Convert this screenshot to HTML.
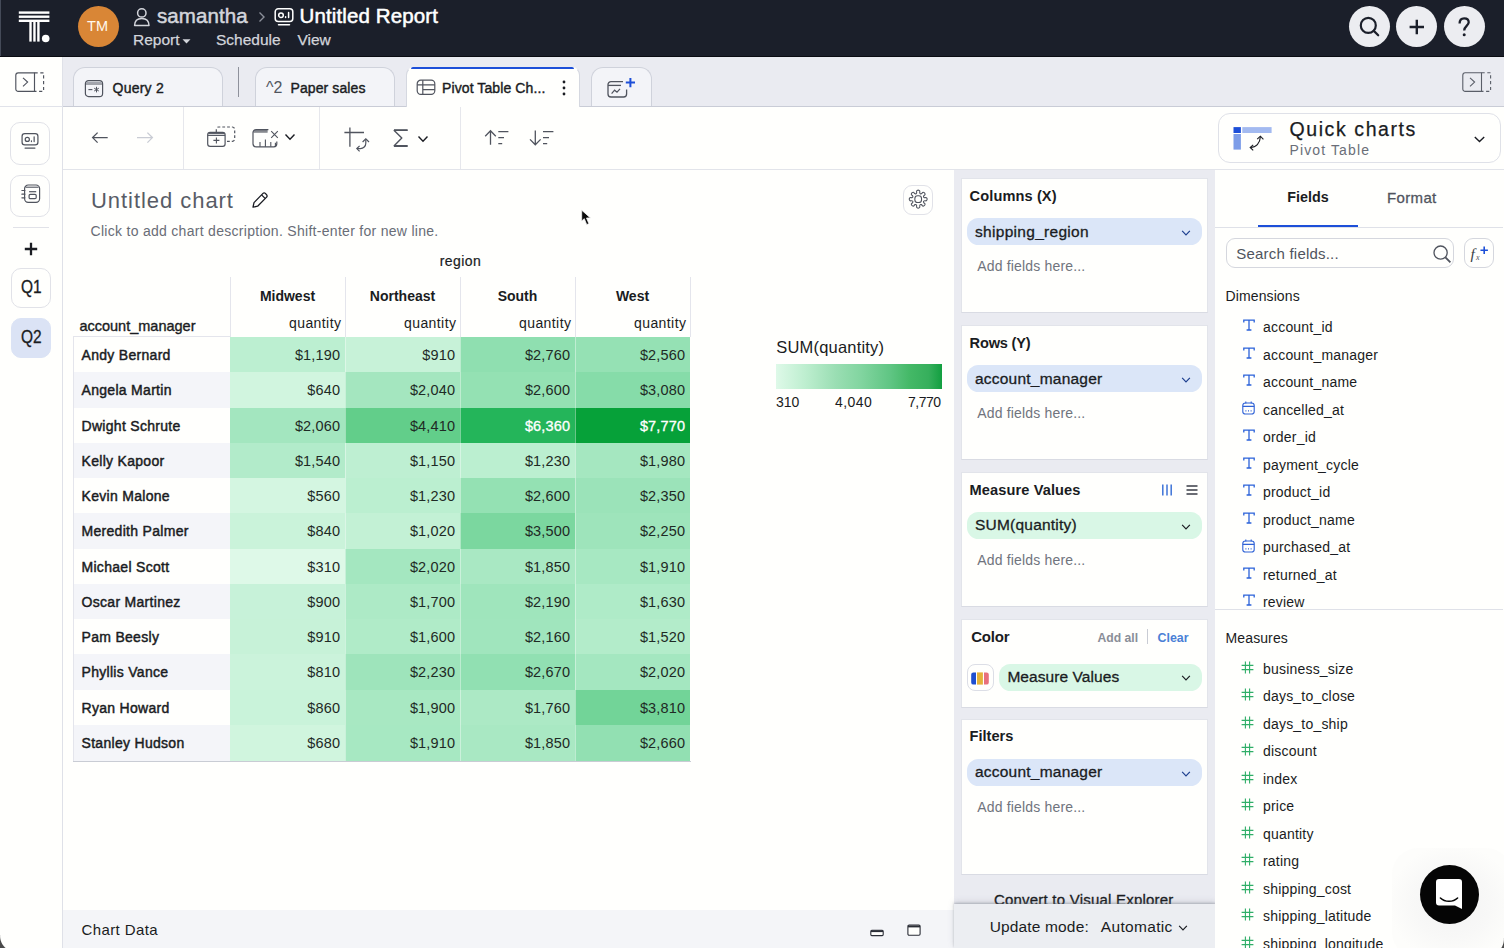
<!DOCTYPE html>
<html>
<head>
<meta charset="utf-8">
<title>Untitled Report</title>
<style>
*{box-sizing:border-box;margin:0;padding:0}
html,body{width:1504px;height:948px;overflow:hidden;background:#fffffd;font-family:"Liberation Sans",sans-serif;color:#1a1c22}
.abs{position:absolute}
#root{position:relative;width:1504px;height:948px;overflow:hidden;background:#fffffd}
svg{display:block;overflow:visible}
/* header */
#hdr{left:0;top:0;width:1504px;height:57px;border-bottom:1px solid #0a0c12;background:#1b1f2a}
.t{position:absolute;white-space:nowrap;line-height:1}
/* tab strip */
#tabs{left:63px;top:57px;width:1441px;height:50px;background:#eaebf1;border-bottom:1px solid #c9ccd6}
.tab{position:absolute;top:10px;height:39px;border:1px solid #cfd2db;border-bottom:none;border-radius:12px 12px 0 0;background:#f3f4f8}
/* left sidebar */
#lside{left:0;top:57px;width:63px;height:891px;background:#fffffd;border-right:1px solid #dfe1e8}
.sbtn{position:absolute;left:10.3px;width:39.5px;border:1px solid #e1e2e8;border-radius:10px;background:#fffffd}
/* toolbar */
#tbar{left:63px;top:107px;width:1441px;height:63px;background:#fffffd;border-bottom:1px solid #e2e4ea}
.vdiv{position:absolute;top:0;width:1px;height:62px;background:#e6e7ec}
/* config column */
#cfg{left:953.5px;top:170px;width:261.5px;height:778px;background:#eaebf1}
.card{position:absolute;left:7.5px;width:246.5px;background:#fffffd;border:1px solid #e2e4ea;border-bottom-color:#d9dbe3}
.pill{position:absolute;left:5px;width:235px;height:25px;border-radius:12.5px}
.pill.b{background:#dbe6f8}
.pill.g{background:#d9f7e6}
.ct{position:absolute;left:7.6px;font-size:14.6px;font-weight:bold;color:#1a1c22;white-space:nowrap;line-height:1}
.ph{position:absolute;left:15.3px;font-size:14px;letter-spacing:0.17px;color:#70747d;white-space:nowrap;line-height:1}
/* right panel */
#rp{left:1215px;top:170px;width:289px;height:778px;background:#fffffd}
.fl{position:absolute;left:48px;font-size:14px;letter-spacing:0.2px;margin-top:-0.6px;color:#1a1c22;white-space:nowrap;line-height:1}
/* table */
.rh{position:absolute;left:10px;width:157.5px;height:36px;font-size:14px;letter-spacing:0.3px;-webkit-text-stroke:0.45px #1a1c22;color:#1a1c22;padding-left:8.5px;white-space:nowrap;overflow:hidden}
.c{position:absolute;width:115px;font-size:14.5px;letter-spacing:0.14px;color:#1f2a25;text-align:right;padding-right:4.9px;white-space:nowrap;overflow:hidden}
.ch{width:115px;text-align:center;font-size:14px;font-weight:bold;color:#1a1c22}
.cq{width:111.4px;text-align:right;font-size:14px;letter-spacing:0.42px;color:#1a1c22}
.lgl{font-size:14px;color:#1a1c22}
.pt{position:absolute;left:13px;font-size:15.5px;color:#1a1c22;white-space:nowrap;line-height:1;-webkit-text-stroke:0.3px #1a1c22}
.chv{position:absolute;left:219px}
.pill{height:27px;border-radius:11.5px}
.md{-webkit-text-stroke:0.4px currentColor}
</style>
</head>
<body>
<div id="root">

<!-- HEADER -->
<div id="hdr" class="abs">
  <div class="abs" style="left:0;top:0;width:1px;height:56px;background:#444a58"></div>
  <!-- logo -->
  <svg class="abs" style="left:20px;top:10px" width="34" height="36" viewBox="0 0 34 36">
    <g fill="#ffffff">
      <rect x="-1.2" y="1.4" width="30.6" height="2.4"/>
      <rect x="-1.2" y="5.5" width="30.6" height="2.4"/>
      <rect x="-1.2" y="9.6" width="30.6" height="2.4"/>
      <rect x="9.3" y="12" width="2.4" height="19.6"/>
      <rect x="13.25" y="12" width="2.4" height="19.6"/>
      <rect x="17.2" y="12" width="2.4" height="19.6"/>
      <circle cx="25.7" cy="28.5" r="3.8"/>
    </g>
  </svg>
  <!-- avatar -->
  <div class="abs" style="left:77.6px;top:6.2px;width:41px;height:41px;border-radius:50%;background:#d98636"></div>
  <div class="t" style="left:87px;top:19px;font-size:14.5px;color:#fff8ee;letter-spacing:0.2px">TM</div>
  <!-- person icon -->
  <svg class="abs" style="left:133px;top:7px" width="18" height="21" viewBox="0 0 18 21" fill="none" stroke="#d3d5db" stroke-width="1.5">
    <circle cx="8.8" cy="5.9" r="4.2"/>
    <path d="M1.6 18.6 C1.6 13.6 4.6 11.4 8.8 11.4 C13 11.4 16 13.6 16 18.6 Z" stroke-linejoin="round"/>
  </svg>
  <div class="t" id="h_sam" style="left:157px;top:6px;font-size:20.5px;letter-spacing:0.1px;color:#d3d5db;-webkit-text-stroke:0.5px #d3d5db">samantha</div>
  <svg class="abs" style="left:258px;top:11px" width="8" height="12" viewBox="0 0 8 12" fill="none" stroke="#8c909b" stroke-width="1.4"><path d="M1.5 1.5 L6 6 L1.5 10.5"/></svg>
  <!-- report icon -->
  <svg class="abs" style="left:274px;top:7px" width="20" height="20" viewBox="0 0 20 20" fill="none" stroke="#ffffff" stroke-width="1.5">
    <rect x="1.2" y="1.8" width="17.6" height="12.6" rx="3"/>
    <circle cx="7" cy="8.2" r="2.3"/>
    <path d="M11.6 10.6 v-0.8 M14.6 10.6 v-5.2 M4.5 17.8 h11" stroke-linecap="round"/>
  </svg>
  <div class="t" id="h_title" style="left:299.5px;top:6px;font-size:20.5px;letter-spacing:0.12px;color:#ffffff;-webkit-text-stroke:0.5px #ffffff">Untitled Report</div>
  <div class="t" id="h_rep" style="left:133px;top:32px;font-size:15.5px;color:#d3d5db;-webkit-text-stroke:0.25px #d3d5db">Report</div>
  <svg class="abs" style="left:182px;top:39px" width="9" height="5" viewBox="0 0 9 5"><path d="M0.5 0.3 L8.5 0.3 L4.5 4.6 Z" fill="#d3d5db"/></svg>
  <div class="t" id="h_sch" style="left:216px;top:32px;font-size:15.5px;color:#d3d5db;-webkit-text-stroke:0.25px #d3d5db">Schedule</div>
  <div class="t" id="h_view" style="left:297.5px;top:32px;font-size:15.5px;color:#d3d5db;-webkit-text-stroke:0.25px #d3d5db">View</div>
  <!-- right circles -->
  <div class="abs" style="left:1349px;top:6px;width:41px;height:41px;border-radius:50%;background:#ecedf1"></div>
  <div class="abs" style="left:1396px;top:6px;width:41px;height:41px;border-radius:50%;background:#ecedf1"></div>
  <div class="abs" style="left:1444px;top:6px;width:41px;height:41px;border-radius:50%;background:#ecedf1"></div>
  <svg class="abs" style="left:1358px;top:15px" width="24" height="24" viewBox="0 0 24 24" fill="none" stroke="#1b1f2a" stroke-width="2.2"><circle cx="10.3" cy="10.4" r="7.5"/><path d="M15.8 15.9 L20.2 20.3" stroke-linecap="round"/></svg>
  <svg class="abs" style="left:1406px;top:16px" width="22" height="22" viewBox="0 0 22 22" fill="none" stroke="#1b1f2a" stroke-width="2.4"><path d="M10.8 3.8 V18.2 M3.6 11 H18"/></svg>
  <svg class="abs" style="left:1454px;top:14px" width="20" height="26" viewBox="0 0 20 26" fill="none" stroke="#1b1f2a" stroke-width="2.3"><path d="M5.6 9.6 C5.6 5.6 7.6 4.3 10.2 4.3 C12.9 4.3 14.7 5.9 14.7 8.3 C14.7 11.8 10.2 12.2 10.2 16.6"/><circle cx="10.2" cy="20.7" r="1.5" fill="#1b1f2a" stroke="none"/></svg>
</div>

<!-- LEFT SIDEBAR -->
<div id="lside" class="abs">
  <!-- collapse icon (coords relative to lside top=57) -->
  <svg class="abs" style="left:14px;top:14px" width="32" height="24" viewBox="0 0 32 24" fill="none" stroke="#50545e" stroke-width="1.15">
    <path d="M20.5 1.8 H4.2 a2.4 2.4 0 0 0 -2.4 2.4 V18 a2.4 2.4 0 0 0 2.4 2.4 H20.5 Z"/>
    <path d="M9 6.8 L13.6 11.1 L9 15.4"/>
    <path d="M20.5 1.8 H29.6 V20.4 H20.5" stroke-dasharray="3.2 2.6"/>
  </svg>
  <div class="abs" style="left:0;top:49px;width:63px;height:1px;background:#e1e3ea"></div>
  <div class="sbtn" style="top:65px;height:42.6px"></div>
  <svg class="abs" style="left:21px;top:75.4px" width="18" height="18" viewBox="0 0 20 20" fill="none" stroke="#50545e" stroke-width="1.35">
    <rect x="1.2" y="1.8" width="17.6" height="12.6" rx="3"/>
    <circle cx="7" cy="8.2" r="2.3"/>
    <path d="M11.6 10.6 v-0.8 M14.6 10.6 v-5.2 M4.5 17.8 h11" stroke-linecap="round"/>
  </svg>
  <div class="sbtn" style="top:117.8px;height:42.4px"></div>
  <svg class="abs" style="left:20.6px;top:127px" width="20" height="20" viewBox="0 0 20 20" fill="none" stroke="#50545e" stroke-width="1.2">
    <rect x="3.6" y="1" width="15" height="17.4" rx="3.6"/>
    <path d="M4.6 3.2 H17.6" stroke-width="1.1"/>
    <path d="M8.1 7.7 H15.2"/>
    <rect x="8.1" y="10.3" width="7.1" height="4.4" rx="1.2"/>
    <path d="M0.9 6.5 h3 M0.9 10.2 h3 M0.9 13.8 h3" stroke-linecap="round"/>
  </svg>
  <div class="abs" style="left:13px;top:170px;width:36px;height:1px;background:#e1e2e8"></div>
  <svg class="abs" style="left:24.4px;top:184.6px" width="14" height="14" viewBox="0 0 14 14" fill="none" stroke="#1a1c22" stroke-width="2.3"><path d="M7 0.8 V13.2 M0.8 7 H13.2"/></svg>
  <div class="sbtn" style="top:211px;height:40px;left:11px;width:40px"></div>
  <div class="t" style="left:19.7px;top:221.6px;transform:scale(0.91,1.08);font-size:17px;color:#1a1c22;-webkit-text-stroke:0.3px #1a1c22">Q1</div>
  <div class="sbtn" style="top:261px;height:40px;left:11px;width:40px;background:#dbe3f5;border-color:#dbe3f5"></div>
  <div class="t" style="left:19.7px;top:271.6px;transform:scale(0.91,1.08);font-size:17px;color:#1a1c22;-webkit-text-stroke:0.3px #1a1c22">Q2</div>
</div>

<!-- TAB STRIP -->
<div id="tabs" class="abs">
  <!-- coordinates relative to (63,57) -->
  <div class="tab" style="left:10px;width:150px"></div>
  <svg class="abs" style="left:21px;top:21.9px" width="20" height="20" viewBox="0 0 20 20" fill="none" stroke="#50545e" stroke-width="1.2">
    <rect x="1.4" y="1.6" width="17.2" height="16" rx="3.2"/>
    <path d="M1.6 5 H18.4" stroke-width="1"/>
    <path d="M2.4 3.4 H17.6" stroke-width="1" stroke="#9a9da6"/>
    <path d="M4.4 10.6 H8.4" stroke-width="1.1"/><path d="M12.5 7.8 V13.4 M10.2 9.2 L14.8 12 M14.8 9.2 L10.2 12" stroke-width="1"/>
  </svg>
  <div class="t md" id="tb1" style="left:49.5px;top:24.2px;font-size:14px;letter-spacing:0.25px;color:#1a1c22">Query 2</div>
  <div class="abs" style="left:175px;top:10px;width:1px;height:30px;background:#8e919b"></div>
  <div class="tab" style="left:191.5px;width:140.5px"></div>
  <div class="t" style="left:203px;top:23px;font-size:16px;color:#50545e">^2</div>
  <div class="t md" id="tb2" style="left:227.5px;top:24.2px;font-size:14px;letter-spacing:0.1px;color:#1a1c22">Paper sales</div>
  <div class="tab" style="left:342.5px;width:174.5px;height:41px;background:#fffffd;border-color:#d5d8e0;border-top-color:transparent;border-radius:8px 8px 0 0"></div><div class="abs" style="left:348px;top:9.6px;width:163px;height:2.9px;background:#1d4fd8;border-radius:2px 2px 0 0"></div>
  <svg class="abs" style="left:353px;top:22px" width="20" height="17" viewBox="0 0 20 17" fill="none" stroke="#50545e" stroke-width="1.2">
    <rect x="1.2" y="1.2" width="17.6" height="14.2" rx="3.6"/>
    <path d="M1.2 5.8 H18.8 M6.8 1.2 V15.4 M6.8 10.6 H18.8"/>
  </svg>
  <div class="t md" id="tb3" style="left:379px;top:24.2px;font-size:14px;letter-spacing:0.1px;color:#1a1c22">Pivot Table Ch...</div>
  <svg class="abs" style="left:498px;top:22px" width="6" height="18" viewBox="0 0 6 18" fill="#1a1c22"><circle cx="3" cy="3" r="1.4"/><circle cx="3" cy="9" r="1.4"/><circle cx="3" cy="15" r="1.4"/></svg>
  <div class="tab" style="left:527.5px;width:61.5px"></div>
  <svg class="abs" style="left:543px;top:20px" width="32" height="22" viewBox="0 0 32 22" fill="none" stroke="#50545e" stroke-width="1.3">
    <path d="M17 4.6 H5 a3 3 0 0 0 -3 3 V17 a3 3 0 0 0 3 3 H17.6 a3 3 0 0 0 3 -3 V12.6"/>
    <path d="M2 8.4 H15"/>
    <path d="M5.6 16.6 L8.6 13.2 L11 15.2 L14 11.8" stroke-width="1.2"/>
    <path d="M5.4 23.2 H17.4" stroke-width="0"/>
    <path d="M24.4 1 V10.2 M19.8 5.6 H29" stroke="#1d4fd8" stroke-width="2"/>
  </svg>
  <!-- right collapse icon -->
  <svg class="abs" style="left:1398px;top:14px" width="32" height="24" viewBox="0 0 32 24" fill="none" stroke="#5a5e68" stroke-width="1.1">
    <path d="M20.5 1.8 H4.2 a2.4 2.4 0 0 0 -2.4 2.4 V18 a2.4 2.4 0 0 0 2.4 2.4 H20.5 Z"/>
    <path d="M9 6.8 L13.6 11.1 L9 15.4"/>
    <path d="M20.5 1.8 H29.6 V20.4 H20.5" stroke-dasharray="3.2 2.6"/>
  </svg>
</div>

<!-- TOOLBAR -->
<div id="tbar" class="abs">
  <!-- coordinates relative to (63,107) -->
  <svg class="abs" style="left:28px;top:24px" width="18" height="14" viewBox="0 0 18 14" fill="none" stroke="#50545e" stroke-width="1.3"><path d="M16.7 6.6 H1.8 M6.6 1.6 L1.6 6.6 L6.6 11.6"/></svg>
  <svg class="abs" style="left:73px;top:24px" width="18" height="14" viewBox="0 0 18 14" fill="none" stroke="#c9ccd4" stroke-width="1.3"><path d="M1 6.6 H16.2 M11.4 1.6 L16.4 6.6 L11.4 11.6"/></svg>
  <div class="vdiv" style="left:120px"></div>
  <!-- duplicate -->
  <svg class="abs" style="left:143px;top:19px" width="31" height="25" viewBox="0 0 31 25" fill="none" stroke="#50545e" stroke-width="1.2">
    <path d="M10.3 6 V3.4 a2.4 2.4 0 0 1 2.4 -2.4 H26.3 a2.4 2.4 0 0 1 2.4 2.4 V12.9 a2.4 2.4 0 0 1 -2.4 2.4 H19.4" stroke-dasharray="2.8 2"/>
    <rect x="1.7" y="6.4" width="17.4" height="13.9" rx="2.4"/>
    <path d="M1.7 9.4 H19.1" stroke-width="1.1"/>
    <path d="M2.6 7.6 H18.2" stroke-width="1" />
    <path d="M10.4 11.4 V17.4 M7.4 14.4 H13.4" stroke-width="1.1"/>
  </svg>
  <!-- chart x -->
  <svg class="abs" style="left:189px;top:20px" width="28" height="24" viewBox="0 0 28 24" fill="none" stroke="#50545e" stroke-width="1.2">
    <path d="M16.4 2.6 H4 a3 3 0 0 0 -3 3 V16.8 a3 3 0 0 0 3 3 H21.8 a3 3 0 0 0 3 -3 V14.6" />
    <path d="M1.4 5 H15.6" stroke-width="1.1"/>
    <path d="M2.4 3.8 H15.6" stroke-width="1"/>
    <path d="M8 19.8 V15 M13.4 19.8 V12.4 M18.8 19.8 V15 M23.4 19.4 V15.8" stroke-width="1.1"/>
    <path d="M19.2 4.2 L25.8 10.8 M25.8 4.2 L19.2 10.8" stroke-width="1.1"/>
  </svg>
  <svg class="abs" style="left:222px;top:27.4px" width="10" height="6" viewBox="0 0 10 6" fill="none" stroke="#1a1c22" stroke-width="1.4"><path d="M0.5 0.6 L5 5.2 L9.5 0.6"/></svg>
  <div class="vdiv" style="left:255.5px"></div>
  <!-- pivot swap -->
  <svg class="abs" style="left:280px;top:19px" width="28" height="26" viewBox="0 0 28 26" fill="none" stroke="#50545e" stroke-width="1.3">
    <path d="M6.9 1.4 V20.8 M1.4 6.5 H21"/>
    <path d="M14 22.6 H17.4 a5.4 5.4 0 0 0 5.4 -5.4 V13.4" stroke-width="1.2"/>
    <path d="M16.6 19.8 L13.8 22.6 L16.6 25.4 M19.6 16 L22.8 12.8 L26 16" stroke-width="1.2"/>
  </svg>
  <!-- sigma -->
  <svg class="abs" style="left:329px;top:21.2px" width="18" height="20" viewBox="0 0 18 20" fill="none" stroke="#50545e" stroke-width="1.4"><path d="M15.6 2.4 H2.2 L9.8 10 L2.2 17.8 H15.6" stroke-linejoin="round"/><path d="M2 2 H15.6 M2 18.2 H15.6" stroke-width="1.6"/></svg>
  <svg class="abs" style="left:355px;top:29.4px" width="10" height="6" viewBox="0 0 10 6" fill="none" stroke="#1a1c22" stroke-width="1.4"><path d="M0.5 0.6 L5 5.2 L9.5 0.6"/></svg>
  <div class="vdiv" style="left:396.5px"></div>
  <!-- sort asc -->
  <svg class="abs" style="left:421px;top:22px" width="27" height="18" viewBox="0 0 27 18" fill="none" stroke="#50545e" stroke-width="1.3">
    <path d="M6.5 15.8 V2 M1.2 7.2 L6.5 1.8 L11.8 7.2"/>
    <path d="M14.3 2.6 H24.4 M14.3 8.7 H20 M14.3 14.7 H18.2"/>
  </svg>
  <!-- sort desc -->
  <svg class="abs" style="left:466px;top:22px" width="27" height="18" viewBox="0 0 27 18" fill="none" stroke="#50545e" stroke-width="1.3">
    <path d="M6.3 1.6 V15.6 M1 10.4 L6.3 15.8 L11.6 10.4"/>
    <path d="M14 2.6 H24.4 M14 8.7 H20 M14 14.7 H18.2"/>
  </svg>
  <!-- quick charts -->
  <div class="abs" style="left:1155px;top:6px;width:283px;height:50px;border:1px solid #dfe1e8;border-radius:12px;background:#fffffd"></div>
  <svg class="abs" style="left:1169px;top:19px" width="42" height="28" viewBox="0 0 42 28">
    <rect x="1.5" y="1.1" width="7.4" height="5.9" fill="#1d4fd8"/>
    <rect x="10.3" y="1.1" width="29.3" height="5.9" fill="#a3baf0"/>
    <rect x="1.5" y="8" width="7.4" height="15.6" fill="#7d9de8"/>
    <g fill="none" stroke="#1a1c22" stroke-width="1.1"><path d="M18.5 21.5 C24 21.5 28 17.5 28.4 10.6"/><path d="M21.2 18.8 L18.2 21.5 L21.2 24.4 M25.2 13.2 L28.4 10.2 L31.4 13.4"/></g>
  </svg>
  <div class="t" id="qc1" style="left:1226.5px;top:13px;font-size:19.5px;letter-spacing:1.59px;color:#1a1c22;-webkit-text-stroke:0.25px #1a1c22">Quick charts</div>
  <div class="t" id="qc2" style="left:1226.5px;top:36px;font-size:14px;letter-spacing:1.12px;color:#6a6e78">Pivot Table</div>
  <svg class="abs" style="left:1411px;top:29px" width="11" height="7" viewBox="0 0 11 7" fill="none" stroke="#1a1c22" stroke-width="1.4"><path d="M0.8 1 L5.5 5.6 L10.2 1"/></svg>
</div>

<!-- MAIN -->
<div id="main" class="abs" style="left:63px;top:170px;width:891px;height:778px">
  <!-- coordinates relative to (63,170) -->
  <div class="t" id="m_title" style="left:28px;top:19.5px;font-size:22px;letter-spacing:0.95px;color:#585c66">Untitled chart</div>
  <svg class="abs" style="left:188px;top:21px" width="18" height="18" viewBox="0 0 18 18" fill="none" stroke="#1a1c22" stroke-width="1.3">
    <path d="M2 16.2 L3 11.6 L12 2.4 a1.6 1.6 0 0 1 2.3 0 L15.6 3.8 a1.6 1.6 0 0 1 0 2.3 L6.6 15.2 Z" stroke-linejoin="round"/>
    <path d="M10.6 3.9 L14.1 7.4"/>
  </svg>
  <div class="t" id="m_desc" style="left:27.5px;top:54.3px;font-size:14px;letter-spacing:0.29px;color:#696d77">Click to add chart description. Shift-enter for new line.</div>
  <!-- gear -->
  <div class="abs" style="left:840.3px;top:15px;width:29.7px;height:30px;border:1px solid #e1e2e8;border-radius:9px"></div>
  <svg class="abs" style="left:844.2px;top:18.3px" width="22.4" height="22.4" viewBox="0 0 24 24" fill="none" stroke="#50545e" stroke-width="1.15" stroke-linejoin="round">
    <rect x="8.4" y="8.4" width="7.2" height="7.2" rx="3"/>
    <path d="M10.64 2.90 C11.69 2.02 12.31 2.02 13.36 2.90 C14.41 3.78 13.14 4.45 13.79 5.54 C14.44 6.63 14.07 6.48 15.30 6.17 C16.53 5.86 16.11 4.48 17.47 4.60 C18.84 4.72 19.28 5.16 19.40 6.53 C19.52 7.89 18.14 7.47 17.83 8.70 C17.52 9.93 17.37 9.56 18.46 10.21 C19.55 10.86 20.22 9.59 21.10 10.64 C21.98 11.69 21.98 12.31 21.10 13.36 C20.22 14.41 19.55 13.14 18.46 13.79 C17.37 14.44 17.52 14.07 17.83 15.30 C18.14 16.53 19.52 16.11 19.40 17.47 C19.28 18.84 18.84 19.28 17.47 19.40 C16.11 19.52 16.53 18.14 15.30 17.83 C14.07 17.52 14.44 17.37 13.79 18.46 C13.14 19.55 14.41 20.22 13.36 21.10 C12.31 21.98 11.69 21.98 10.64 21.10 C9.59 20.22 10.86 19.55 10.21 18.46 C9.56 17.37 9.93 17.52 8.70 17.83 C7.47 18.14 7.89 19.52 6.53 19.40 C5.16 19.28 4.72 18.84 4.60 17.47 C4.48 16.11 5.86 16.53 6.17 15.30 C6.48 14.07 6.63 14.44 5.54 13.79 C4.45 13.14 3.78 14.41 2.90 13.36 C2.02 12.31 2.02 11.69 2.90 10.64 C3.78 9.59 4.45 10.86 5.54 10.21 C6.63 9.56 6.48 9.93 6.17 8.70 C5.86 7.47 4.48 7.89 4.60 6.53 C4.72 5.16 5.16 4.72 6.53 4.60 C7.89 4.48 7.47 5.86 8.70 6.17 C9.93 6.48 9.56 6.63 10.21 5.54 C10.86 4.45 9.59 3.78 10.64 2.90 Z"/>
  </svg>
  <!-- pivot header -->
  <div class="t" id="p_region" style="left:347.5px;top:84px;width:100px;text-align:center;font-size:14px;letter-spacing:0.45px;color:#1a1c22;-webkit-text-stroke:0.2px #1a1c22">region</div>
  <div class="abs" style="left:167px;top:107px;width:1px;height:60px;background:#e4e5ec"></div>
  <div class="abs" style="left:282px;top:107px;width:1px;height:60px;background:#e4e5ec"></div>
  <div class="abs" style="left:397px;top:107px;width:1px;height:60px;background:#e4e5ec"></div>
  <div class="abs" style="left:512px;top:107px;width:1px;height:60px;background:#e4e5ec"></div>
  <div class="abs" style="left:627px;top:107px;width:1px;height:60px;background:#e4e5ec"></div>
  <div class="t ch" style="left:167px;top:119px">Midwest</div>
  <div class="t ch" style="left:282px;top:119px">Northeast</div>
  <div class="t ch" style="left:397px;top:119px">South</div>
  <div class="t ch" style="left:512px;top:119px">West</div>
  <div class="t cq" style="left:167px;top:146px">quantity</div>
  <div class="t cq" style="left:282px;top:146px">quantity</div>
  <div class="t cq" style="left:397px;top:146px">quantity</div>
  <div class="t cq" style="left:512px;top:146px">quantity</div>
  <div class="t" id="p_am" style="left:16.4px;top:148.8px;font-size:14.5px;color:#1a1c22;-webkit-text-stroke:0.35px #1a1c22">account_manager</div>
<div class="rh" style="top:167.00px;height:35.57px;line-height:37.07px;background:#fffffd">Andy Bernard</div>
<div class="c" style="left:167px;top:167.00px;height:35.57px;line-height:37.07px;background:#bcefd1;">$1,190</div>
<div class="c" style="left:282px;top:167.00px;height:35.57px;line-height:37.07px;background:#c7f2d8;">$910</div>
<div class="c" style="left:397px;top:167.00px;height:35.57px;line-height:37.07px;background:#8fdfb0;">$2,760</div>
<div class="c" style="left:512px;top:167.00px;height:35.57px;line-height:37.07px;background:#95e1b4;">$2,560</div>
<div class="rh" style="top:202.27px;height:35.57px;line-height:37.07px;background:#f4f5f9">Angela Martin</div>
<div class="c" style="left:167px;top:202.27px;height:35.57px;line-height:37.07px;background:#d1f5df;">$640</div>
<div class="c" style="left:282px;top:202.27px;height:35.57px;line-height:37.07px;background:#a4e6bf;">$2,040</div>
<div class="c" style="left:397px;top:202.27px;height:35.57px;line-height:37.07px;background:#94e1b3;">$2,600</div>
<div class="c" style="left:512px;top:202.27px;height:35.57px;line-height:37.07px;background:#86dca9;">$3,080</div>
<div class="rh" style="top:237.54px;height:35.57px;line-height:37.07px;background:#fffffd">Dwight Schrute</div>
<div class="c" style="left:167px;top:237.54px;height:35.57px;line-height:37.07px;background:#a3e6bf;">$2,060</div>
<div class="c" style="left:282px;top:237.54px;height:35.57px;line-height:37.07px;background:#62ce8a;">$4,410</div>
<div class="c" style="left:397px;top:237.54px;height:35.57px;line-height:37.07px;background:#24b55a;color:#ffffff;-webkit-text-stroke:0.3px #ffffff;">$6,360</div>
<div class="c" style="left:512px;top:237.54px;height:35.57px;line-height:37.07px;background:#06a139;color:#ffffff;-webkit-text-stroke:0.3px #ffffff;">$7,770</div>
<div class="rh" style="top:272.81px;height:35.57px;line-height:37.07px;background:#f4f5f9">Kelly Kapoor</div>
<div class="c" style="left:167px;top:272.81px;height:35.57px;line-height:37.07px;background:#b2ebca;">$1,540</div>
<div class="c" style="left:282px;top:272.81px;height:35.57px;line-height:37.07px;background:#beefd2;">$1,150</div>
<div class="c" style="left:397px;top:272.81px;height:35.57px;line-height:37.07px;background:#bbefd0;">$1,230</div>
<div class="c" style="left:512px;top:272.81px;height:35.57px;line-height:37.07px;background:#a5e7c0;">$1,980</div>
<div class="rh" style="top:308.08px;height:35.57px;line-height:37.07px;background:#fffffd">Kevin Malone</div>
<div class="c" style="left:167px;top:308.08px;height:35.57px;line-height:37.07px;background:#d4f6e1;">$560</div>
<div class="c" style="left:282px;top:308.08px;height:35.57px;line-height:37.07px;background:#bbefd0;">$1,230</div>
<div class="c" style="left:397px;top:308.08px;height:35.57px;line-height:37.07px;background:#94e1b3;">$2,600</div>
<div class="c" style="left:512px;top:308.08px;height:35.57px;line-height:37.07px;background:#9be3b9;">$2,350</div>
<div class="rh" style="top:343.35px;height:35.57px;line-height:37.07px;background:#f4f5f9">Meredith Palmer</div>
<div class="c" style="left:167px;top:343.35px;height:35.57px;line-height:37.07px;background:#caf3da;">$840</div>
<div class="c" style="left:282px;top:343.35px;height:35.57px;line-height:37.07px;background:#c3f1d5;">$1,020</div>
<div class="c" style="left:397px;top:343.35px;height:35.57px;line-height:37.07px;background:#7bd79f;">$3,500</div>
<div class="c" style="left:512px;top:343.35px;height:35.57px;line-height:37.07px;background:#9ee4bb;">$2,250</div>
<div class="rh" style="top:378.62px;height:35.57px;line-height:37.07px;background:#fffffd">Michael Scott</div>
<div class="c" style="left:167px;top:378.62px;height:35.57px;line-height:37.07px;background:#def9e8;">$310</div>
<div class="c" style="left:282px;top:378.62px;height:35.57px;line-height:37.07px;background:#a4e7c0;">$2,020</div>
<div class="c" style="left:397px;top:378.62px;height:35.57px;line-height:37.07px;background:#a9e8c3;">$1,850</div>
<div class="c" style="left:512px;top:378.62px;height:35.57px;line-height:37.07px;background:#a7e8c2;">$1,910</div>
<div class="rh" style="top:413.89px;height:35.57px;line-height:37.07px;background:#f4f5f9">Oscar Martinez</div>
<div class="c" style="left:167px;top:413.89px;height:35.57px;line-height:37.07px;background:#c7f2d9;">$900</div>
<div class="c" style="left:282px;top:413.89px;height:35.57px;line-height:37.07px;background:#adeac6;">$1,700</div>
<div class="c" style="left:397px;top:413.89px;height:35.57px;line-height:37.07px;background:#9fe5bc;">$2,190</div>
<div class="c" style="left:512px;top:413.89px;height:35.57px;line-height:37.07px;background:#afebc8;">$1,630</div>
<div class="rh" style="top:449.16px;height:35.57px;line-height:37.07px;background:#fffffd">Pam Beesly</div>
<div class="c" style="left:167px;top:449.16px;height:35.57px;line-height:37.07px;background:#c7f2d8;">$910</div>
<div class="c" style="left:282px;top:449.16px;height:35.57px;line-height:37.07px;background:#b0ebc8;">$1,600</div>
<div class="c" style="left:397px;top:449.16px;height:35.57px;line-height:37.07px;background:#a0e5bd;">$2,160</div>
<div class="c" style="left:512px;top:449.16px;height:35.57px;line-height:37.07px;background:#b3ecca;">$1,520</div>
<div class="rh" style="top:484.43px;height:35.57px;line-height:37.07px;background:#f4f5f9">Phyllis Vance</div>
<div class="c" style="left:167px;top:484.43px;height:35.57px;line-height:37.07px;background:#cbf3db;">$810</div>
<div class="c" style="left:282px;top:484.43px;height:35.57px;line-height:37.07px;background:#9ee4bb;">$2,230</div>
<div class="c" style="left:397px;top:484.43px;height:35.57px;line-height:37.07px;background:#91e0b2;">$2,670</div>
<div class="c" style="left:512px;top:484.43px;height:35.57px;line-height:37.07px;background:#a4e7c0;">$2,020</div>
<div class="rh" style="top:519.70px;height:35.57px;line-height:37.07px;background:#fffffd">Ryan Howard</div>
<div class="c" style="left:167px;top:519.70px;height:35.57px;line-height:37.07px;background:#c9f3da;">$860</div>
<div class="c" style="left:282px;top:519.70px;height:35.57px;line-height:37.07px;background:#a8e8c2;">$1,900</div>
<div class="c" style="left:397px;top:519.70px;height:35.57px;line-height:37.07px;background:#ace9c5;">$1,760</div>
<div class="c" style="left:512px;top:519.70px;height:35.57px;line-height:37.07px;background:#72d498;">$3,810</div>
<div class="rh" style="top:554.97px;height:35.57px;line-height:37.07px;background:#f4f5f9">Stanley Hudson</div>
<div class="c" style="left:167px;top:554.97px;height:35.57px;line-height:37.07px;background:#d0f5de;">$680</div>
<div class="c" style="left:282px;top:554.97px;height:35.57px;line-height:37.07px;background:#a7e8c2;">$1,910</div>
<div class="c" style="left:397px;top:554.97px;height:35.57px;line-height:37.07px;background:#a9e8c3;">$1,850</div>
<div class="c" style="left:512px;top:554.97px;height:35.57px;line-height:37.07px;background:#92e0b2;">$2,660</div>
  <div class="abs" style="left:281.5px;top:167px;width:1px;height:423.5px;background:rgba(255,255,255,0.4)"></div>
  <div class="abs" style="left:396.5px;top:167px;width:1px;height:423.5px;background:rgba(255,255,255,0.4)"></div>
  <div class="abs" style="left:511.5px;top:167px;width:1px;height:423.5px;background:rgba(255,255,255,0.4)"></div>
  <div class="abs" style="left:10px;top:166.3px;width:158px;height:1px;background:#e4e5ec"></div>
  <div class="abs" style="left:10px;top:167px;width:1px;height:424px;background:#e4e5ec"></div>
  <div class="abs" style="left:10px;top:590.5px;width:618px;height:1.5px;background:#c9ccd4"></div>
  <!-- legend -->
  <div class="t" id="lg_t" style="left:713.2px;top:168.8px;font-size:16.5px;letter-spacing:0.2px;color:#1a1c22">SUM(quantity)</div>
  <div class="abs" style="left:713px;top:194px;width:166px;height:25px;background:linear-gradient(90deg,#def9e8 0%,#bdeecf 18%,#9adeb3 36%,#82d5a0 51%,#5fc583 69%,#43b866 81%,#36af5c 92%,#129f40 100%)"></div>
  <div class="t lgl" style="left:713px;top:225px">310</div>
  <div class="t lgl" id="lg_m" style="left:772px;top:225px;letter-spacing:0.45px">4,040</div>
  <div class="t lgl" id="lg_r" style="left:845px;top:225px;letter-spacing:-0.5px">7,770</div>
  <!-- chart data bar -->
  <div class="abs" style="left:0;top:739.7px;width:890.5px;height:39px;background:#f4f5f8"></div>
  <div class="t" id="cd" style="left:18.5px;top:752px;font-size:15px;letter-spacing:0.4px;color:#1a1c22">Chart Data</div>
  <svg class="abs" style="left:807px;top:758.6px" width="14" height="8" viewBox="0 0 14 8" fill="#fffffd" stroke="#2a2d36" stroke-width="1.1"><rect x="0.8" y="1.2" width="12.4" height="5.4" rx="1"/><path d="M1 2.2 H13" stroke-width="1.8"/></svg>
  <svg class="abs" style="left:843.6px;top:754px" width="14" height="12" viewBox="0 0 14 12" fill="#fffffd" stroke="#2a2d36" stroke-width="1.1"><rect x="0.9" y="1" width="12.2" height="10.2" rx="1.2"/><path d="M1 2.4 H13" stroke-width="2"/></svg>
</div>


<!-- CONFIG -->
<div id="cfg" class="abs">
  <!-- coordinates relative to (954,170) -->
  <div class="card" style="top:8px;height:135px">
    <div class="ct" id="c1t" style="top:9.8px;letter-spacing:0.1px">Columns (X)</div>
    <div class="pill b" style="top:39.4px"></div>
    <div class="pt" id="c1p" style="top:44.7px;letter-spacing:0.3px">shipping_region</div>
    <svg class="chv" style="top:51.4px" width="10" height="6" viewBox="0 0 11 7" fill="none" stroke="#1d3f8f" stroke-width="1.4"><path d="M1 1 L5.5 5.6 L10 1"/></svg>
    <div class="ph" style="top:80px">Add fields here...</div>
  </div>
  <div class="card" style="top:155px;height:135px">
    <div class="ct" id="c2t" style="top:9.8px;letter-spacing:-0.2px">Rows (Y)</div>
    <div class="pill b" style="top:39.4px"></div>
    <div class="pt" id="c2p" style="top:44.7px;letter-spacing:0.22px">account_manager</div>
    <svg class="chv" style="top:51.4px" width="10" height="6" viewBox="0 0 11 7" fill="none" stroke="#1d3f8f" stroke-width="1.4"><path d="M1 1 L5.5 5.6 L10 1"/></svg>
    <div class="ph" style="top:80px">Add fields here...</div>
  </div>
  <div class="card" style="top:301.8px;height:135.6px">
    <div class="ct" id="c3t" style="top:9.8px;letter-spacing:0.1px">Measure Values</div>
    <svg class="abs" style="left:199px;top:11px" width="12" height="12" viewBox="0 0 12 12" fill="none" stroke="#3f74d8" stroke-width="1.5"><path d="M1.8 0.5 V11.5 M6 0.5 V11.5 M10.2 0.5 V11.5"/></svg>
    <svg class="abs" style="left:224px;top:11px" width="12" height="12" viewBox="0 0 12 12" fill="none" stroke="#3a3d46" stroke-width="1.6"><path d="M0.5 2 H11.5 M0.5 6 H11.5 M0.5 10 H11.5"/></svg>
    <div class="pill g" style="top:39.4px"></div>
    <div class="pt" id="c3p" style="top:44px;letter-spacing:0.22px">SUM(quantity)</div>
    <svg class="chv" style="top:51.4px" width="10" height="6" viewBox="0 0 11 7" fill="none" stroke="#1a1c22" stroke-width="1.4"><path d="M1 1 L5.5 5.6 L10 1"/></svg>
    <div class="ph" style="top:80px">Add fields here...</div>
  </div>
  <div class="card" style="top:448.7px;height:89.2px">
    <div class="ct" id="c4t" style="top:9.4px;left:9.2px;font-size:15px;letter-spacing:-0.2px">Color</div>
    <div class="t" id="c4a" style="left:135.5px;top:12px;font-size:12.2px;font-weight:bold;color:#8a8e98">Add all</div>
    <div class="abs" style="left:185px;top:9px;width:1px;height:15px;background:#c9ccd4"></div>
    <div class="t" id="c4c" style="left:195.5px;top:12px;font-size:12.4px;font-weight:bold;color:#4a7fd6">Clear</div>
    <div class="abs" style="left:4.5px;top:44.8px;width:27px;height:27px;border:1px solid #dcdee6;border-radius:8px;background:#fffffd"></div>
    <svg class="abs" style="left:8px;top:51px" width="20" height="15" viewBox="0 0 20 15"><path d="M3.4 1.4 H6 V13.6 H3.4 a2.2 2.2 0 0 1 -2.2 -2.2 V3.6 a2.2 2.2 0 0 1 2.2 -2.2 Z" fill="#1f4fd0"/><rect x="7" y="1.4" width="5.9" height="12.2" fill="#e4b23a"/><path d="M14 1.4 H16.6 a2.2 2.2 0 0 1 2.2 2.2 V11.4 a2.2 2.2 0 0 1 -2.2 2.2 H14 Z" fill="#e8707c"/></svg>
    <div class="pill g" style="top:44.8px;left:37px;width:202.5px"></div>
    <div class="pt" id="c4p" style="top:49.7px;left:45.4px;letter-spacing:0.07px">Measure Values</div>
    <svg class="chv" style="top:55.6px;left:218.5px" width="10" height="6" viewBox="0 0 11 7" fill="none" stroke="#1a1c22" stroke-width="1.4"><path d="M1 1 L5.5 5.6 L10 1"/></svg>
  </div>
  <div class="card" style="top:548.6px;height:156.2px">
    <div class="ct" id="c5t" style="top:9.8px">Filters</div>
    <div class="pill b" style="top:39.4px"></div>
    <div class="pt" id="c5p" style="top:44.7px;letter-spacing:0.22px">account_manager</div>
    <svg class="chv" style="top:51.4px" width="10" height="6" viewBox="0 0 11 7" fill="none" stroke="#1d3f8f" stroke-width="1.4"><path d="M1 1 L5.5 5.6 L10 1"/></svg>
    <div class="ph" style="top:80px">Add fields here...</div>
  </div>
  <div class="t" id="cve" style="left:40.4px;top:721.6px;font-size:15px;letter-spacing:0.22px;color:#1a1c22;-webkit-text-stroke:0.3px #1a1c22">Convert to Visual Explorer</div>
  <div class="abs" style="left:0;top:734px;width:262px;height:44px;background:#eceef2;box-shadow:0 -1px 2px rgba(90,95,110,0.32),0 -2px 6px rgba(110,115,130,0.22)"></div>
  <div class="t" id="um1" style="left:36.2px;top:749px;font-size:15.5px;letter-spacing:0.15px;color:#1a1c22">Update mode:</div>
  <div class="t" id="um2" style="left:147.3px;top:749px;font-size:15.5px;letter-spacing:0.33px;color:#1a1c22">Automatic</div>
  <svg class="abs" style="left:224px;top:754.5px" width="10" height="6" viewBox="0 0 11 7" fill="none" stroke="#1a1c22" stroke-width="1.4"><path d="M1 1 L5.5 5.6 L10 1"/></svg>
</div>


<!-- RIGHT PANEL -->
<div id="rp" class="abs">
  <!-- coordinates relative to (1216,170) -->
  <div class="t" id="r_f" style="left:72.3px;top:20px;font-size:14.3px;font-weight:bold;color:#1a1c22">Fields</div>
  <div class="t" id="r_fm" style="left:172px;top:19.8px;font-size:15px;letter-spacing:0.35px;color:#50545e;-webkit-text-stroke:0.3px #50545e">Format</div>
  <div class="abs" style="left:0;top:57px;width:288px;height:1px;background:#dfe1e8"></div>
  <div class="abs" style="left:43px;top:55px;width:99.5px;height:2.1px;background:#1d4fd8"></div>
  <div class="abs" style="left:10.6px;top:68px;width:228.4px;height:29.8px;border:1px solid #d5d7de;border-radius:9px"></div>
  <div class="t" id="r_s" style="left:21.3px;top:76px;font-size:15px;letter-spacing:0.21px;color:#50545e">Search fields...</div>
  <svg class="abs" style="left:217px;top:74px" width="20" height="20" viewBox="0 0 20 20" fill="none" stroke="#50545e" stroke-width="1.3"><circle cx="8.6" cy="8.6" r="6.6"/><path d="M13.4 13.4 L18.4 18.4" stroke-width="1.8"/></svg>
  <div class="abs" style="left:249px;top:68px;width:30px;height:29.8px;border:1px solid #d5d7de;border-radius:9px"></div>
  <div class="t" style="left:255.5px;top:75.5px;font-family:'Liberation Serif',serif;font-style:italic;font-size:15.5px;color:#3a3d46">f</div>
  <div class="t" style="left:261px;top:84px;font-family:'Liberation Serif',serif;font-style:italic;font-size:8px;color:#50545e">x</div>
  <svg class="abs" style="left:265px;top:75.6px" width="8.4" height="8.4" viewBox="0 0 9 9" fill="none" stroke="#1d4fd8" stroke-width="1.7"><path d="M4.5 0.5 V8.5 M0.5 4.5 H8.5"/></svg>
  <div class="t" id="r_d" style="left:10.6px;top:119.2px;font-size:14px;letter-spacing:0.1px;color:#1a1c22">Dimensions</div>
  <div class="abs" style="left:0;top:140px;width:288px;height:299px;overflow:hidden">
    <svg class="abs" style="left:28px;top:9.0px" width="12" height="13" viewBox="0 0 12 13" fill="none" stroke="#2b62d9" stroke-width="1.3"><path d="M0.8 3.4 V1.1 H11.2 V3.4 M6 1.1 V11 M3.6 11 H8.4"/></svg>
    <div class="fl" style="top:10.6px">account_id</div>
    <svg class="abs" style="left:28px;top:36.5px" width="12" height="13" viewBox="0 0 12 13" fill="none" stroke="#2b62d9" stroke-width="1.3"><path d="M0.8 3.4 V1.1 H11.2 V3.4 M6 1.1 V11 M3.6 11 H8.4"/></svg>
    <div class="fl" style="top:38.1px">account_manager</div>
    <svg class="abs" style="left:28px;top:64.0px" width="12" height="13" viewBox="0 0 12 13" fill="none" stroke="#2b62d9" stroke-width="1.3"><path d="M0.8 3.4 V1.1 H11.2 V3.4 M6 1.1 V11 M3.6 11 H8.4"/></svg>
    <div class="fl" style="top:65.6px">account_name</div>
    <svg class="abs" style="left:27px;top:91.0px" width="13" height="14" viewBox="0 0 13 14" fill="none" stroke="#2f62d6" stroke-width="1.1"><rect x="0.8" y="2" width="11.4" height="11" rx="2.6"/><path d="M0.8 5.4 H12.2 M3.8 0.6 V2.6 M9.2 0.6 V2.6" /><path d="M3.4 9.8 h1 M6 9.8 h1 M8.6 9.8 h1" stroke-width="1.3"/></svg>
    <div class="fl" style="top:93.1px">cancelled_at</div>
    <svg class="abs" style="left:28px;top:119.0px" width="12" height="13" viewBox="0 0 12 13" fill="none" stroke="#2b62d9" stroke-width="1.3"><path d="M0.8 3.4 V1.1 H11.2 V3.4 M6 1.1 V11 M3.6 11 H8.4"/></svg>
    <div class="fl" style="top:120.6px">order_id</div>
    <svg class="abs" style="left:28px;top:146.5px" width="12" height="13" viewBox="0 0 12 13" fill="none" stroke="#2b62d9" stroke-width="1.3"><path d="M0.8 3.4 V1.1 H11.2 V3.4 M6 1.1 V11 M3.6 11 H8.4"/></svg>
    <div class="fl" style="top:148.1px">payment_cycle</div>
    <svg class="abs" style="left:28px;top:174.0px" width="12" height="13" viewBox="0 0 12 13" fill="none" stroke="#2b62d9" stroke-width="1.3"><path d="M0.8 3.4 V1.1 H11.2 V3.4 M6 1.1 V11 M3.6 11 H8.4"/></svg>
    <div class="fl" style="top:175.6px">product_id</div>
    <svg class="abs" style="left:28px;top:201.5px" width="12" height="13" viewBox="0 0 12 13" fill="none" stroke="#2b62d9" stroke-width="1.3"><path d="M0.8 3.4 V1.1 H11.2 V3.4 M6 1.1 V11 M3.6 11 H8.4"/></svg>
    <div class="fl" style="top:203.1px">product_name</div>
    <svg class="abs" style="left:27px;top:228.5px" width="13" height="14" viewBox="0 0 13 14" fill="none" stroke="#2f62d6" stroke-width="1.1"><rect x="0.8" y="2" width="11.4" height="11" rx="2.6"/><path d="M0.8 5.4 H12.2 M3.8 0.6 V2.6 M9.2 0.6 V2.6" /><path d="M3.4 9.8 h1 M6 9.8 h1 M8.6 9.8 h1" stroke-width="1.3"/></svg>
    <div class="fl" style="top:230.6px">purchased_at</div>
    <svg class="abs" style="left:28px;top:256.5px" width="12" height="13" viewBox="0 0 12 13" fill="none" stroke="#2b62d9" stroke-width="1.3"><path d="M0.8 3.4 V1.1 H11.2 V3.4 M6 1.1 V11 M3.6 11 H8.4"/></svg>
    <div class="fl" style="top:258.1px">returned_at</div>
    <svg class="abs" style="left:28px;top:284.0px" width="12" height="13" viewBox="0 0 12 13" fill="none" stroke="#2b62d9" stroke-width="1.3"><path d="M0.8 3.4 V1.1 H11.2 V3.4 M6 1.1 V11 M3.6 11 H8.4"/></svg>
    <div class="fl" style="top:285.6px">review</div>
  </div>
  <div class="abs" style="left:0;top:439px;width:288px;height:1px;background:#dfe1e8"></div>
  <div class="t" id="r_m" style="left:10.6px;top:461.1px;font-size:14px;letter-spacing:0.1px;color:#1a1c22">Measures</div>
  <svg class="abs" style="left:26px;top:490.5px" width="13" height="13" viewBox="0 0 13 13" fill="none" stroke="#2fae68" stroke-width="1.1"><path d="M4.4 0.6 V12.4 M8.6 0.6 V12.4 M0.6 4.4 H12.4 M0.6 8.6 H12.4"/></svg>
  <div class="fl" style="top:492.1px">business_size</div>
  <svg class="abs" style="left:26px;top:518.0px" width="13" height="13" viewBox="0 0 13 13" fill="none" stroke="#2fae68" stroke-width="1.1"><path d="M4.4 0.6 V12.4 M8.6 0.6 V12.4 M0.6 4.4 H12.4 M0.6 8.6 H12.4"/></svg>
  <div class="fl" style="top:519.6px">days_to_close</div>
  <svg class="abs" style="left:26px;top:545.5px" width="13" height="13" viewBox="0 0 13 13" fill="none" stroke="#2fae68" stroke-width="1.1"><path d="M4.4 0.6 V12.4 M8.6 0.6 V12.4 M0.6 4.4 H12.4 M0.6 8.6 H12.4"/></svg>
  <div class="fl" style="top:547.1px">days_to_ship</div>
  <svg class="abs" style="left:26px;top:573.0px" width="13" height="13" viewBox="0 0 13 13" fill="none" stroke="#2fae68" stroke-width="1.1"><path d="M4.4 0.6 V12.4 M8.6 0.6 V12.4 M0.6 4.4 H12.4 M0.6 8.6 H12.4"/></svg>
  <div class="fl" style="top:574.6px">discount</div>
  <svg class="abs" style="left:26px;top:600.5px" width="13" height="13" viewBox="0 0 13 13" fill="none" stroke="#2fae68" stroke-width="1.1"><path d="M4.4 0.6 V12.4 M8.6 0.6 V12.4 M0.6 4.4 H12.4 M0.6 8.6 H12.4"/></svg>
  <div class="fl" style="top:602.1px">index</div>
  <svg class="abs" style="left:26px;top:628.0px" width="13" height="13" viewBox="0 0 13 13" fill="none" stroke="#2fae68" stroke-width="1.1"><path d="M4.4 0.6 V12.4 M8.6 0.6 V12.4 M0.6 4.4 H12.4 M0.6 8.6 H12.4"/></svg>
  <div class="fl" style="top:629.6px">price</div>
  <svg class="abs" style="left:26px;top:655.5px" width="13" height="13" viewBox="0 0 13 13" fill="none" stroke="#2fae68" stroke-width="1.1"><path d="M4.4 0.6 V12.4 M8.6 0.6 V12.4 M0.6 4.4 H12.4 M0.6 8.6 H12.4"/></svg>
  <div class="fl" style="top:657.1px">quantity</div>
  <svg class="abs" style="left:26px;top:683.0px" width="13" height="13" viewBox="0 0 13 13" fill="none" stroke="#2fae68" stroke-width="1.1"><path d="M4.4 0.6 V12.4 M8.6 0.6 V12.4 M0.6 4.4 H12.4 M0.6 8.6 H12.4"/></svg>
  <div class="fl" style="top:684.6px">rating</div>
  <svg class="abs" style="left:26px;top:710.5px" width="13" height="13" viewBox="0 0 13 13" fill="none" stroke="#2fae68" stroke-width="1.1"><path d="M4.4 0.6 V12.4 M8.6 0.6 V12.4 M0.6 4.4 H12.4 M0.6 8.6 H12.4"/></svg>
  <div class="fl" style="top:712.1px">shipping_cost</div>
  <svg class="abs" style="left:26px;top:738.0px" width="13" height="13" viewBox="0 0 13 13" fill="none" stroke="#2fae68" stroke-width="1.1"><path d="M4.4 0.6 V12.4 M8.6 0.6 V12.4 M0.6 4.4 H12.4 M0.6 8.6 H12.4"/></svg>
  <div class="fl" style="top:739.6px">shipping_latitude</div>
  <svg class="abs" style="left:26px;top:765.5px" width="13" height="13" viewBox="0 0 13 13" fill="none" stroke="#2fae68" stroke-width="1.1"><path d="M4.4 0.6 V12.4 M8.6 0.6 V12.4 M0.6 4.4 H12.4 M0.6 8.6 H12.4"/></svg>
  <div class="fl" style="top:767.1px">shipping_longitude</div>
  <div class="abs" style="left:177px;top:678px;width:120px;height:110px;border-radius:26px;background:radial-gradient(ellipse at center,#f3f3f3 0%,#f8f8f7 45%,#fdfdfb 75%)"></div>
  <div class="abs" style="left:205px;top:694.5px;width:59px;height:59px;border-radius:50%;background:#050505"></div>
  <svg class="abs" style="left:220px;top:708px" width="30" height="33" viewBox="0 0 30 33"><path d="M4 1 H24 a3 3 0 0 1 3 3 V31 L20 27.6 H4 a3 3 0 0 1 -3 -3 V4 a3 3 0 0 1 3 -3 Z" fill="#ffffff"/><path d="M5.4 20 C10 24.4 18 24.4 22.6 20" fill="none" stroke="#050505" stroke-width="1.5" stroke-linecap="round"/></svg>
</div>

<svg class="abs" style="left:580px;top:208.6px" width="13" height="19" viewBox="0 0 13 19"><path d="M1.7 1.2 L1.7 12 L4.3 9.7 L6.7 15.6 L8.9 14.7 L6.5 9 L10.4 8.9 Z" fill="#0a0a0a" stroke="#f2f2f2" stroke-width="0.8"/></svg>
<div class="abs" style="left:0;top:935px;width:8px;height:13px;background:radial-gradient(circle 16px at 16px 1px,rgba(70,70,70,0) 15.4px,#4a4a4a 16.4px)"></div>
<div class="abs" style="left:1496px;top:938px;width:8px;height:10px;background:radial-gradient(circle 17px at -9px 1px,rgba(70,70,70,0) 16.4px,#4a4a4a 17.4px)"></div>
</div>
</body>
</html>
